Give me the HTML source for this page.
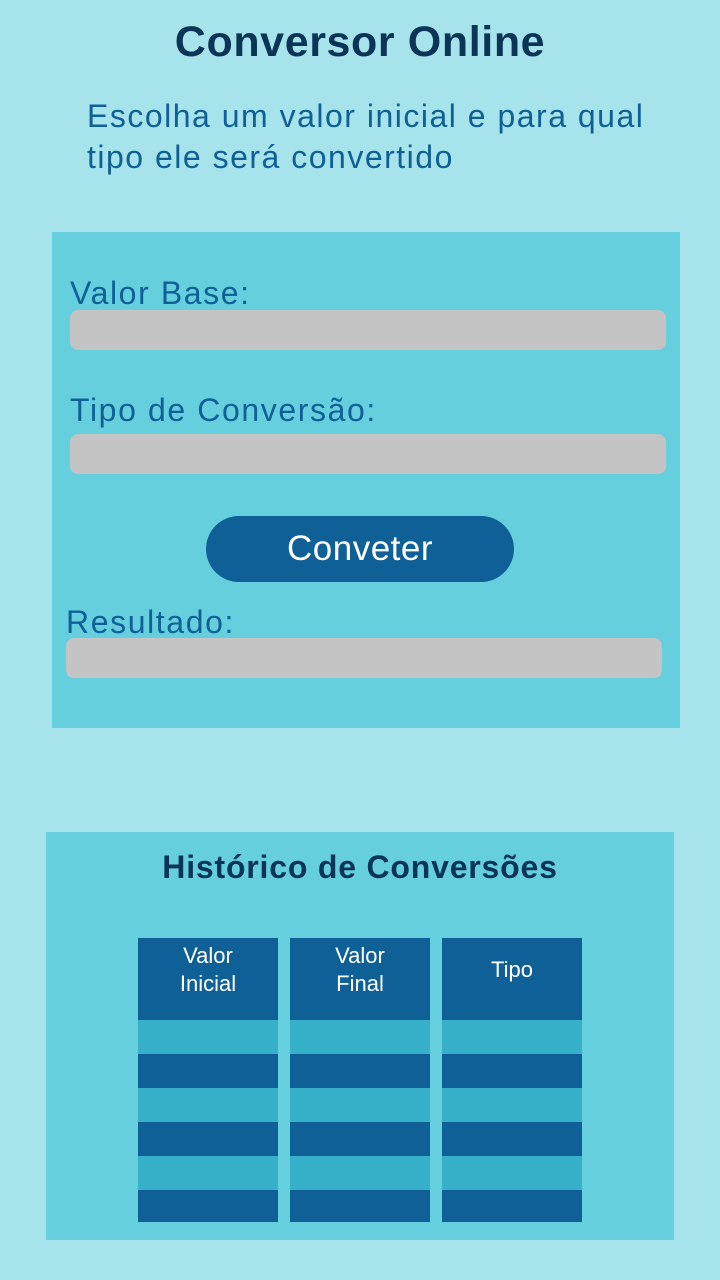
<!DOCTYPE html>
<html><head><meta charset="utf-8"><style>
*{margin:0;padding:0;box-sizing:border-box}
body{width:720px;height:1280px;background:#A6E3EA;font-family:"Liberation Sans",sans-serif;position:relative;overflow:hidden}
.a{position:absolute}
h1{position:absolute;left:0;width:720px;top:18px;text-align:center;font-size:43px;font-weight:bold;color:#0B3556;letter-spacing:0.6px}
.sub{left:87px;top:96px;font-size:32px;line-height:41px;color:#0E6096;letter-spacing:1.5px;white-space:nowrap}
.p{background:#66CFDE}
.lbl{font-size:32px;color:#0E6096;letter-spacing:1.6px;white-space:nowrap}
.in{background:#C4C4C4;border-radius:8px;height:40px}
.btn{background:#0E6096;border-radius:33px;color:#fff;font-size:35px;text-align:center;line-height:66px;letter-spacing:0.5px}
.col{width:140px}
.h{background:#0E6096;height:82px;color:#fff;font-size:22px;text-align:center;line-height:28px;padding-top:4px}
.l{background:#36AFC8;height:34px}.d{background:#0E6096;height:34px}
</style></head><body>
<h1>Conversor Online</h1>
<div class="a sub">Escolha um valor inicial e para qual<br>tipo ele será convertido</div>
<div class="a p" style="left:52px;top:232px;width:628px;height:496px"></div>
<div class="a lbl" style="left:70px;top:275px">Valor Base:</div>
<div class="a in" style="left:70px;top:310px;width:596px"></div>
<div class="a lbl" style="left:70px;top:392px">Tipo de Conversão:</div>
<div class="a in" style="left:70px;top:434px;width:596px"></div>
<div class="a btn" style="left:206px;top:516px;width:308px;height:66px">Conveter</div>
<div class="a lbl" style="left:66px;top:604px">Resultado:</div>
<div class="a in" style="left:66px;top:638px;width:596px"></div>
<div class="a p" style="left:46px;top:832px;width:628px;height:408px"></div>
<div class="a" style="left:46px;width:628px;top:849px;text-align:center;font-size:32px;font-weight:bold;color:#0B3556;letter-spacing:0.8px">Histórico de Conversões</div>
<div class="a col" style="left:138px;top:938px"><div class="h">Valor<br>Inicial</div><div class="l"></div><div class="d"></div><div class="l"></div><div class="d"></div><div class="l"></div><div class="d" style="height:32px"></div></div>
<div class="a col" style="left:290px;top:938px"><div class="h">Valor<br>Final</div><div class="l"></div><div class="d"></div><div class="l"></div><div class="d"></div><div class="l"></div><div class="d" style="height:32px"></div></div>
<div class="a col" style="left:442px;top:938px"><div class="h" style="padding-top:18px">Tipo</div><div class="l"></div><div class="d"></div><div class="l"></div><div class="d"></div><div class="l"></div><div class="d" style="height:32px"></div></div>
</body></html>
